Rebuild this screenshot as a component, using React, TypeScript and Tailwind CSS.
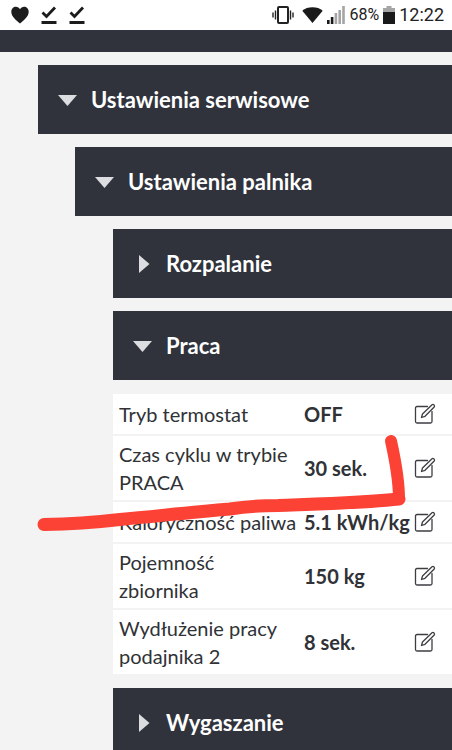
import { useState, type ReactNode } from 'react';

const params = [
  { label: 'Tryb termostat', value: 'OFF' },
  { label: 'Czas cyklu w trybie PRACA', value: '30 sek.' },
  { label: 'Kaloryczność paliwa', value: '5.1 kWh/kg' },
  { label: 'Pojemność zbiornika', value: '150 kg' },
  { label: 'Wydłużenie pracy podajnika 2', value: '8 sek.' },
];

function TaskDoneIcon() {
  return (
    <svg className="w-4 h-5" viewBox="0 0 16 20" fill="none" stroke="#1c1c1c">
      <path d="M1.5 7.5 L5.5 11.5 L14 2.5" strokeWidth="2.8" />
      <path d="M0.5 17.5 H15.5" strokeWidth="3" />
    </svg>
  );
}

function StatusBar() {
  return (
    <header className="flex items-center justify-between h-[30px] shrink-0 pl-[11px] pr-2 bg-white text-[#222]">
      <div className="flex items-center gap-3">
        <svg className="w-[18px] h-[18px]" viewBox="0 0 18 18" fill="#1c1c1c">
          <path d="M9 17.5 C6 15 0.3 11 0.3 5.8 C0.3 2.8 2.4 0.8 4.9 0.8 C6.7 0.8 8.2 1.7 9 3.2 C9.8 1.7 11.3 0.8 13.1 0.8 C15.6 0.8 17.7 2.8 17.7 5.8 C17.7 11 12 15 9 17.5 Z" />
        </svg>
        <TaskDoneIcon />
        <TaskDoneIcon />
      </div>
      <div className="flex items-center gap-1">
        {/* vibrate */}
        <svg className="w-[22px] h-5 mr-1" viewBox="0 0 22 20" fill="none" stroke="#222">
          <rect x="6" y="2" width="10" height="16" rx="1" strokeWidth="2" />
          <path d="M3.5 5.5 V14.5 M18.5 5.5 V14.5" strokeWidth="1.4" />
          <path d="M1 7.5 V12.5 M21 7.5 V12.5" strokeWidth="1.4" />
        </svg>
        {/* wifi */}
        <svg className="w-[21px] h-[18px]" viewBox="0 0 22 18" fill="#1a1a1a">
          <path d="M11 17.5 L0.3 4.5 C3 2.2 6.8 1 11 1 C15.2 1 19 2.2 21.7 4.5 Z" />
        </svg>
        {/* signal */}
        <svg className="w-[18px] h-[18px]" viewBox="0 0 18 18">
          <rect x="0" y="14" width="2.6" height="4" fill="#1a1a1a" />
          <rect x="3.8" y="11" width="2.6" height="7" fill="#1a1a1a" />
          <rect x="7.6" y="7" width="2.6" height="11" fill="#a5a5a5" />
          <rect x="11.4" y="4" width="2.6" height="14" fill="#a5a5a5" />
          <rect x="15.2" y="0" width="2.6" height="18" fill="#a5a5a5" />
        </svg>
        <span className="font-[Roboto,sans-serif] text-base">68%</span>
        {/* battery */}
        <svg className="w-3 h-[18px]" viewBox="0 0 12 18">
          <path d="M3.5 0 H8.5 V2 H12 V6 H0 V2 H3.5 Z" fill="#a5a5a5" />
          <rect y="6" width="12" height="12" fill="#1a1a1a" />
        </svg>
        <span className="font-[Roboto,sans-serif] text-lg">12:22</span>
      </div>
    </header>
  );
}

function EditIcon() {
  return (
    <svg className="w-[22px] h-[22px]" viewBox="0 0 22 22" fill="none" stroke="#3c3e42" strokeWidth="1.3" strokeLinejoin="round" strokeLinecap="round">
      <path d="M13.5 3.5 H3 Q1.5 3.5 1.5 5 V18.5 Q1.5 20 3 20 H16.5 Q18 20 18 18.5 V8.5" />
      <path d="M7.5 14.5 L8.5 11 L18 1.8 Q19 1 20 1.9 Q21 3 20.2 4 L11 13.3 Z" />
    </svg>
  );
}

function Section({ title, defaultOpen = false, children }: { title: string; defaultOpen?: boolean; children?: ReactNode }) {
  const [open, setOpen] = useState(defaultOpen);

  return (
    <section className="flex flex-col gap-[13px]">
      <button
        type="button"
        aria-expanded={open}
        onClick={() => setOpen(!open)}
        className="flex items-center h-[69px] pl-5 gap-[13px] bg-[#30333c] text-white text-[22px] font-bold text-left"
      >
        <svg className="w-5 h-5 shrink-0" viewBox="0 0 20 20" fill="#dcdde0">
          {open ? <path d="M0 5 H19 L9.5 16 Z" /> : <path d="M6 1 L16.5 10 L6 19 Z" />}
        </svg>
        {title}
      </button>
      {open && children}
    </section>
  );
}

function ParamTable() {
  return (
    <div className="relative my-px">
      <table className="w-full table-fixed border-separate border-spacing-0 text-xl leading-7 text-[#303236]">
        <tbody>
          {params.map((param) => (
            <tr key={param.label} className="group">
              <th scope="row" className="w-[191px] h-10 box-content p-0 border-b-2 group-last:border-b-0 border-[#f3f3f3] bg-white text-left font-normal">
                <div className="pl-1.5 py-1 pr-[7px]">{param.label}</div>
              </th>
              <td className="p-0 border-b-2 group-last:border-b-0 border-[#f3f3f3] bg-white font-bold whitespace-nowrap">{param.value}</td>
              <td className="w-[38px] p-0 border-b-2 group-last:border-b-0 border-[#f3f3f3] bg-white">
                <button type="button" aria-label={`Edytuj: ${param.label}`} className="block">
                  <EditIcon />
                </button>
              </td>
            </tr>
          ))}
        </tbody>
      </table>
      {/* red marker stroke */}
      <svg className="absolute -left-20 top-9 w-[380px] h-[104px] pointer-events-none" viewBox="0 0 380 104" fill="none" stroke="#fc4135" strokeLinecap="round" strokeLinejoin="round">
        <path d="M11 94.5 C40 94 65 92 87 89.5 C125 86 160 82 197 79 C215 76 228 75.500 245 75.500 C285 74 330 73 366 69" strokeWidth="13" />
        <path d="M366 69 C366 50 362 29 358 11" strokeWidth="12" />
      </svg>
    </div>
  );
}

export default function App() {
  return (
    <div className="flex flex-col h-screen overflow-hidden bg-[#f3f3f3] font-[Lato,sans-serif]">
      <StatusBar />
      <main className="flex flex-col gap-[13px]">
        <div className="h-[22px] bg-[#30333c]" />
        <div className="pl-[38px]">
          <Section title="Ustawienia serwisowe" defaultOpen>
            <div className="pl-[37px]">
              <Section title="Ustawienia palnika" defaultOpen>
                <div className="flex flex-col gap-[13px] pl-[38px]">
                  <Section title="Rozpalanie" />
                  <Section title="Praca" defaultOpen>
                    <ParamTable />
                  </Section>
                  <Section title="Wygaszanie" />
                </div>
              </Section>
            </div>
          </Section>
        </div>
      </main>
    </div>
  );
}
